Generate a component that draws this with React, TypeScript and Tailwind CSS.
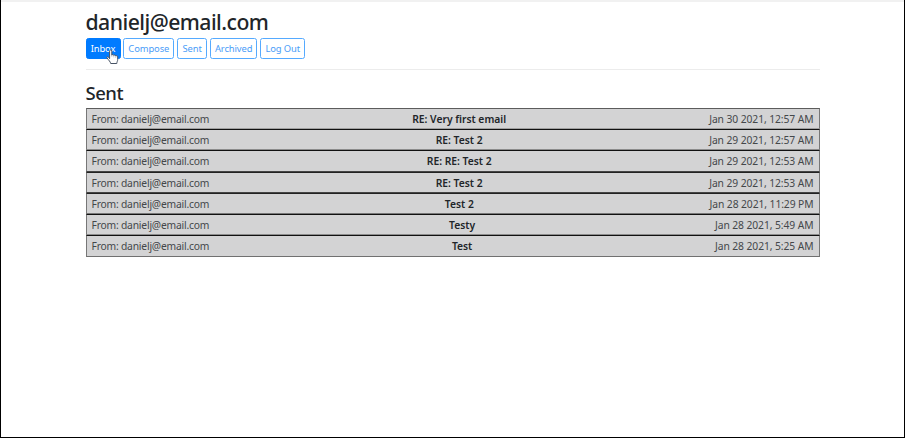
type Mail = { subject: string; date: string; row: string };

const mails: Mail[] = [
  { subject: "RE: Very first email", date: "Jan 30 2021, 12:57 AM", row: "h-[21px] border-t-[#5c5c5c] border-b-[#a0a0a0]" },
  { subject: "RE: Test 2", date: "Jan 29 2021, 12:57 AM", row: "h-[21px] border-t-[#111] border-b-[#8c8c8c]" },
  { subject: "RE: RE: Test 2", date: "Jan 29 2021, 12:53 AM", row: "h-[22px] border-t-[#111] border-b-[#444]" },
  { subject: "RE: Test 2", date: "Jan 29 2021, 12:53 AM", row: "h-[21px] border-t-[#222] border-b-[#444]" },
  { subject: "Test 2", date: "Jan 28 2021, 11:29 PM", row: "h-[21px] border-t-[#222] border-b-[#777]" },
  { subject: "Testy", date: "Jan 28 2021, 5:49 AM", row: "h-[21px] border-t-[#111] border-b-[#8c8c8c]" },
  { subject: "Test", date: "Jan 28 2021, 5:25 AM", row: "h-[22px] border-t-[#111] border-b-[#707070]" },
];

const buttons = [
  { label: "Inbox", style: "w-[35px] bg-[#007bff] border-[#007bff] text-white" },
  { label: "Compose", style: "w-[51px] border-[#55aaff] text-[#4a9df8]" },
  { label: "Sent", style: "w-[30px] border-[#55aaff] text-[#4a9df8]" },
  { label: "Archived", style: "w-[47.5px] border-[#55aaff] text-[#4a9df8]" },
  { label: "Log Out", style: "w-[45px] border-[#55aaff] text-[#4a9df8]" },
];

function HandCursor() {
  return (
    <svg className="absolute left-[19px] top-[10px]" width="13" height="16" viewBox="0 0 13 16">
      <path
        d="M3.6 9.7V2.1c0-1.7 2.2-1.7 2.2 0v4.1c.3-1 1.9-.8 2 .3.5-.8 1.800-.5 1.900.5.8-.6 2-.1 2 1v2.700c0 1.300-.8 2-.9 3.800H4.700c-.2-1.700-2-3.200-3.600-5.500C.3 7.900 1.700 7 2.700 8.500z"
        fill="#fff"
        stroke="#465264"
        strokeWidth="1"
        strokeLinejoin="round"
      />
      <path d="M5.8 6v2M7.800 6.700V8.500M9.700 7.200V9" stroke="#a3abb5" strokeWidth=".5" fill="none" />
    </svg>
  );
}

export default function App() {
  return (
    <div className="h-[438px] w-[905px] overflow-hidden border-x border-b border-black bg-white font-['Noto_Sans','Open_Sans',sans-serif] text-[#212529]">
      <div className="h-[2px] bg-[#f1f1f1]" />
      <main className="ml-[84.5px] w-[734px]">
        <h2 className="h-[36px] pt-[7px] text-[21.2px] font-medium leading-[26px] tracking-[-0.53px]">
          danielj@email.com
        </h2>
        <nav className="flex h-[21px] gap-[2.8px]">
          {buttons.map((b) => (
            <button
              key={b.label}
              className={`relative flex h-[21px] shrink-0 items-center justify-center whitespace-nowrap rounded-[2.5px] border pt-px text-[9.4px] leading-none tracking-[-0.1px] ${b.style}`}
            >
              {b.label}
              {b.label === "Inbox" && <HandCursor />}
            </button>
          ))}
        </nav>
        <hr className="mt-[10px] border-t border-[#ececec]" />
        <h3 className="h-[38px] pt-[11px] text-[18.5px] font-medium leading-[24px] tracking-[-0.5px]">Sent</h3>
        <ul>
          {mails.map((m, i) => (
            <li
              key={i}
              className={`flex items-center justify-between whitespace-nowrap border border-x-[#777] bg-[#d3d3d4] px-[5px] pt-px text-[10.3px] leading-[15px] ${m.row}`}
            >
              <span className="tracking-[-0.2px] text-[#44474a]">From: danielj@email.com</span>
              <span className="font-semibold tracking-[0px]">{m.subject}</span>
              <span className="tracking-[-0.08px] text-[#44474a]">{m.date}</span>
            </li>
          ))}
        </ul>
      </main>
    </div>
  );
}
